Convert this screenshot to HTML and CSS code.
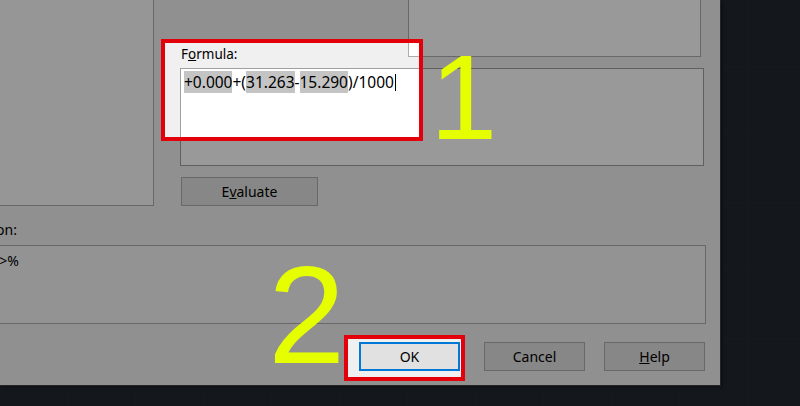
FILE: index.html
```html
<!DOCTYPE html>
<html lang="en">
  <head>
    <meta charset="UTF-8" />
    <title>Field - Formula</title>
    <link rel="stylesheet" href="styles.css">
  </head>
  <body>
    <div class="dialog">
      <div class="top">
        <div class="list-panel"></div>
        <div class="formula-col">
          <div class="formula-head">
            <span class="label">F<u>o</u>rmula:</span>
            <div class="preview-box"></div>
          </div>
          <div class="formula-field">
            <span class="sel">+0.000</span>+(<span class="sel">31.263</span>-<span class="sel">15.290</span>)/1000<span class="caret"></span>
          </div>
          <button class="btn btn-eval">E<u>v</u>aluate</button>
        </div>
      </div>

      <div class="expr-label"><span>Field expression:</span></div>
      <div class="expr-box">
        <div class="expr-text"><span>%&lt;\AcExpr (+0.000+(31.263-15.290)/1000)&gt;%</span></div>
      </div>

      <div class="actions">
        <button class="btn btn-ok">OK</button>
        <button class="btn btn-cancel">Cancel</button>
        <button class="btn btn-help"><u>H</u>elp</button>
      </div>
    </div>

    <!-- dim layer with two holes for the highlighted parts -->
    <svg class="dim" width="800" height="406" viewBox="0 0 800 406">
      <path fill-rule="evenodd" fill="rgba(0,0,0,0.4)"
        d="M0 0H800V406H0Z M161 39V141H423V39Z M344 335V381H465V335Z" />
    </svg>
    <div class="mark mark-formula"></div>
    <div class="mark mark-ok"></div>
    <span class="step step-1">1</span>
    <span class="step step-2">2</span>
  </body>
</html>
```

FILE: styles.css
```css
/* Base */
* {
  box-sizing: border-box;
}
body {
  margin: 0;
  width: 800px;
  height: 406px;
  overflow: hidden;
  position: relative;
  font-family: "Noto Sans", "Open Sans", sans-serif;
  font-size: 14px;
  color: #000;
  background-color: #222831;
  background-image:
    repeating-linear-gradient(90deg, transparent 0 67px, #252b34 67px 68px),
    repeating-linear-gradient(0deg, transparent 0 67px, #252b34 67px 68px);
}

/* Dialog */
.dialog {
  width: 721px;
  height: 386px;
  background-color: #f0f0f0;
  border-right: 1px solid #3c3c3c;
  border-bottom: 1px solid #3c3c3c;
  box-shadow: 1px 1px 3px rgba(0, 0, 0, 0.5);
}
.top {
  display: grid;
  grid-template-columns: 154px 524px;
  column-gap: 26px;
}
.list-panel {
  height: 206px;
  background-color: #fbfbfb;
  border-right: 1px solid #adadad;
  border-bottom: 1px solid #adadad;
}
.formula-col {
  display: flex;
  flex-direction: column;
}
.formula-head {
  display: flex;
  height: 68px;
}
.label {
  align-self: flex-end;
  margin-left: 1px;
  padding-bottom: 5px;
  font-size: 13.5px;
  line-height: 17px;
}
.preview-box {
  margin-left: auto;
  margin-right: 3px;
  width: 293px;
  height: 57px;
  background-color: #fff;
  border: 1px solid #adadad;
  border-top: none;
}
.formula-field {
  height: 98px;
  background-color: #fff;
  border: 1px solid #a0a0a0;
  padding: 3px 3px;
  font-size: 15.5px;
  line-height: 20px;
  white-space: nowrap;
}
.sel {
  background-color: #c4c4c4;
}
.caret {
  display: inline-block;
  width: 1px;
  height: 17px;
  margin-left: 1px;
  background-color: #000;
  vertical-align: -3px;
}

/* Buttons */
.btn {
  height: 29px;
  width: 101px;
  padding: 0;
  font: inherit;
  color: #000;
  background-color: #e1e1e1;
  border: 1px solid #adadad;
}
.btn-eval {
  width: 137px;
  margin: 11px 0 0 1px;
}
.btn-ok {
  margin-left: 359px;
  border: 2px solid #0078d7;
}
.btn-cancel {
  margin-left: 24px;
}
.btn-help {
  margin-left: 19px;
}

/* Field expression */
.expr-label,
.expr-text {
  display: flex;
  justify-content: flex-end;
  white-space: nowrap;
}
.expr-label {
  width: 17px;
  height: 39px;
  align-items: flex-end;
  padding-bottom: 6px;
}
.expr-box {
  width: 706px;
  height: 79px;
  background-color: #f6f6f6;
  border: 1px solid #adadad;
  border-left: none;
}
.expr-text {
  width: 19px;
  padding-top: 5px;
}
.actions {
  display: flex;
  margin-top: 18px;
}

/* Annotations */
.dim {
  position: absolute;
  left: 0;
  top: 0;
}
.mark {
  position: absolute;
  border: 4px solid #e3000b;
}
.mark-formula {
  left: 161px;
  top: 39px;
  width: 262px;
  height: 102px;
}
.mark-ok {
  left: 344px;
  top: 335px;
  width: 121px;
  height: 46px;
}
.step {
  position: absolute;
  font-family: "Liberation Sans", Arial, sans-serif;
  line-height: 1;
  color: #e6ff00;
}
.step-1 {
  left: 430px;
  top: 37px;
  font-size: 121px;
}
.step-2 {
  left: 268px;
  top: 245px;
  font-size: 139px;
}
```
